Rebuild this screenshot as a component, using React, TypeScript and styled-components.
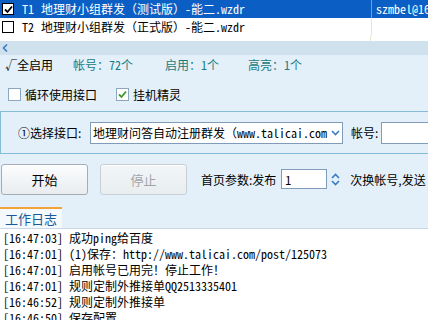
import React from "react";
import styled, { createGlobalStyle } from "styled-components";

const Global = createGlobalStyle`
  html, body { margin: 0; padding: 0; }
  body {
    background: #e3f0f9;
    font-family: "Noto Sans CJK SC", sans-serif;
    font-size: 12px;
    width: 428px;
    height: 320px;
    overflow: hidden;
  }
`;

const MONO = `"Noto Sans Mono CJK SC", "Noto Sans CJK SC", monospace`;

const Page = styled.div`
  width: 428px;
  height: 320px;
  overflow: hidden;
  display: flex;
  flex-direction: column;
`;

const List = styled.div`
  background: #fff;
  height: 41px;
  flex: none;
  display: flex;
  flex-direction: column;
`;

const Row = styled.div<{ $sel?: boolean }>`
  display: grid;
  grid-template-columns: 16px 25px 330px 1fr;
  height: 18px;
  align-items: center;
  background: ${(p) => (p.$sel ? "#0b5fc4" : "#fff")};
  color: ${(p) => (p.$sel ? "#fff" : "#000")};
  font-family: ${MONO};
  font-size: 12px;
  white-space: nowrap;
  overflow: hidden;
`;

const RowBox = styled.span`
  width: 10px;
  height: 10px;
  margin-left: 2px;
  border: 1.5px solid #000;
  background: #fff;
  display: flex;
  align-items: center;
  justify-content: center;
`;

const Cell = styled.span<{ $divider?: boolean; $sel?: boolean }>`
  display: block;
  height: 18px;
  line-height: 18px;
  overflow: hidden;
  padding-left: ${(p) => (p.$divider ? "4px" : "0")};
  border-left: ${(p) =>
    p.$divider ? (p.$sel ? "1px solid #6f9fdc" : "1px solid #ece4d4") : "none"};
`;

const ListFill = styled.div`
  flex: 1;
  display: grid;
  grid-template-columns: 371px 1fr;
`;

const FillDivider = styled.span`
  border-right: 1px solid #ece4d4;
`;

const HScroll = styled.div`
  height: 14px;
  flex: none;
  background: #cfe1ed;
  display: flex;
  align-items: center;
  padding-left: 2px;
`;

const Status = styled.div`
  display: flex;
  flex-direction: column;
  gap: 14px;
  height: 56px;
  flex: none;
  padding-left: 5px;
  padding-top: 1px;
  box-sizing: border-box;
`;

const StatRow = styled.div`
  display: flex;
  height: 16px;
  align-items: center;
  font-family: ${MONO};
  white-space: nowrap;
`;

const Stat = styled.span<{ $teal?: boolean; $w?: number }>`
  color: ${(p) => (p.$teal ? "#1b7b82" : "#000")};
  width: ${(p) => (p.$w ? `${p.$w}px` : "auto")};
  flex: none;
`;

const CheckRow = styled.div`
  display: flex;
  align-items: center;
  height: 16px;
  padding-left: 3px;
`;

const CheckLabel = styled.label<{ $w?: number }>`
  display: flex;
  align-items: center;
  gap: 4px;
  width: ${(p) => (p.$w ? `${p.$w}px` : "auto")};
  color: #000;
  font-size: 12px;
`;

const Box = styled.span`
  width: 11px;
  height: 11px;
  border: 1px solid #8ea7bd;
  background: #fff;
  display: flex;
  align-items: center;
  justify-content: center;
`;

const Group = styled.div`
  height: 41px;
  flex: none;
  border-top: 1px solid #84bcd8;
  border-bottom: 1px solid #84bcd8;
  border-left: 1px solid #84bcd8;
  display: flex;
  align-items: center;
  padding-left: 17px;
  white-space: nowrap;
`;

const FieldLabel = styled.span<{ $w?: number }>`
  color: #000;
  font-size: 12px;
  flex: none;
  width: ${(p) => (p.$w ? `${p.$w}px` : "auto")};
`;

const Select = styled.div`
  width: 251px;
  height: 20px;
  border: 1px solid #7f9db9;
  background: #fff;
  display: flex;
  align-items: center;
  flex: none;
  margin-right: 8px;
`;

const SelectText = styled.span`
  flex: 1;
  overflow: hidden;
  white-space: nowrap;
  font-family: ${MONO};
  padding-left: 2px;
`;

const SelectArrow = styled.span`
  width: 14px;
  display: flex;
  align-items: center;
  justify-content: center;
`;

const TextInput = styled.div`
  width: 60px;
  height: 20px;
  border: 1px solid #7f9db9;
  background: #fff;
  flex: none;
  margin-left: 3px;
`;

const Controls = styled.div`
  display: flex;
  align-items: center;
  height: 32px;
  flex: none;
  margin-top: 9px;
  padding-left: 1px;
  white-space: nowrap;
`;

const Button = styled.button<{ $disabled?: boolean }>`
  width: 87px;
  height: 31px;
  border-radius: 3px;
  border: 1px solid ${(p) => (p.$disabled ? "#c6cfd6" : "#a4adb6")};
  background: ${(p) =>
    p.$disabled
      ? "linear-gradient(#f2f6f8, #e8edf0)"
      : "linear-gradient(#fbfcfd, #e9edf0)"};
  color: ${(p) => (p.$disabled ? "#a0a4a8" : "#000")};
  font-family: "Noto Sans CJK SC", sans-serif;
  font-size: 13px;
  margin-right: 12px;
  padding: 0;
  box-shadow: inset 0 1px 0 #fff;
`;

const ParamLabel = styled.span`
  margin-left: 2px;
  font-size: 12px;
  color: #000;
`;

const Spin = styled.div`
  display: flex;
  align-items: center;
  margin-left: 5px;
  margin-right: 5px;
`;

const SpinInput = styled.div`
  width: 46px;
  height: 20px;
  border: 1px solid #7f9db9;
  background: #fff;
  font-family: ${MONO};
  line-height: 20px;
  padding-left: 3px;
  box-sizing: border-box;
`;

const SpinArrows = styled.div`
  width: 16px;
  display: flex;
  flex-direction: column;
  align-items: center;
  gap: 1px;
`;

const Tabs = styled.div`
  margin-top: 12px;
  height: 21px;
  flex: none;
  border-bottom: 1px solid #c9d8e6;
  display: flex;
`;

const Tab = styled.div`
  width: 62px;
  height: 21px;
  box-sizing: border-box;
  border-top: 2px solid #f3a33a;
  background: #f4f9fd;
  color: #1a5a9a;
  font-size: 13px;
  display: flex;
  align-items: center;
  justify-content: center;
`;

const Log = styled.div`
  flex: 1;
  background: #fff;
  padding: 1px 0 0 3px;
  font-family: ${MONO};
  font-size: 12px;
  color: #000;
`;

const LogLine = styled.div`
  height: 16px;
  line-height: 16px;
  white-space: nowrap;
`;

const Check = ({ color }: { color: string }) => (
  <svg width="9" height="9" viewBox="0 0 9 9">
    <path d="M1 4.5 L3.5 7 L8 1.5" stroke={color} strokeWidth="1.8" fill="none" />
  </svg>
);

const Chevron = ({ up }: { up?: boolean }) => (
  <svg width="9" height="6" viewBox="0 0 9 6">
    <path
      d={up ? "M1 5 L4.5 1.5 L8 5" : "M1 1 L4.5 4.5 L8 1"}
      stroke="#3a7cc4"
      strokeWidth="1.6"
      fill="none"
    />
  </svg>
);

const logs = [
  "[16:47:03] 成功ping给百度",
  "[16:47:01] (1)保存：http://www.talicai.com/post/125073",
  "[16:47:01] 启用帐号已用完！停止工作！",
  "[16:47:01] 规则定制外推接单QQ2513335401",
  "[16:46:52] 规则定制外推接单",
  "[16:46:50] 保存配置",
];

export default function App() {
  return (
    <Page>
      <Global />
      <List>
        <Row $sel>
          <RowBox>
            <Check color="#000" />
          </RowBox>
          <Cell>&nbsp;T1</Cell>
          <Cell>地理财小组群发（测试版）-能二.wzdr</Cell>
          <Cell $divider $sel>szmbel@16</Cell>
        </Row>
        <Row>
          <RowBox />
          <Cell>&nbsp;T2</Cell>
          <Cell>地理财小组群发（正式版）-能二.wzdr</Cell>
          <Cell $divider />
        </Row>
        <ListFill>
          <FillDivider />
          <span />
        </ListFill>
      </List>
      <HScroll>
        <svg width="6" height="8" viewBox="0 0 6 8">
          <path d="M5 0.5 L1.5 4 L5 7.5" stroke="#3a7cc4" strokeWidth="1.6" fill="none" />
        </svg>
      </HScroll>
      <Status>
        <StatRow>
          <Stat $w={68}>√全启用</Stat>
          <Stat $teal $w={92}>帐号：72个</Stat>
          <Stat $teal $w={83}>启用：1个</Stat>
          <Stat $teal>高亮：1个</Stat>
        </StatRow>
        <CheckRow>
          <CheckLabel $w={108}>
            <Box />
            循环使用接口
          </CheckLabel>
          <CheckLabel>
            <Box>
              <Check color="#3a9a2a" />
            </Box>
            挂机精灵
          </CheckLabel>
        </CheckRow>
      </Status>
      <Group>
        <FieldLabel $w={72}>①选择接口:</FieldLabel>
        <Select>
          <SelectText>地理财问答自动注册群发（www.talicai.com</SelectText>
          <SelectArrow>
            <Chevron />
          </SelectArrow>
        </Select>
        <FieldLabel>帐号:</FieldLabel>
        <TextInput />
      </Group>
      <Controls>
        <Button>开始</Button>
        <Button $disabled>停止</Button>
        <ParamLabel>首页参数:发布</ParamLabel>
        <Spin>
          <SpinInput>1</SpinInput>
          <SpinArrows>
            <Chevron up />
            <Chevron />
          </SpinArrows>
        </Spin>
        <ParamLabel>次换帐号,发送</ParamLabel>
      </Controls>
      <Tabs>
        <Tab>工作日志</Tab>
      </Tabs>
      <Log>
        {logs.map((l) => (
          <LogLine key={l}>{l}</LogLine>
        ))}
      </Log>
    </Page>
  );
}
